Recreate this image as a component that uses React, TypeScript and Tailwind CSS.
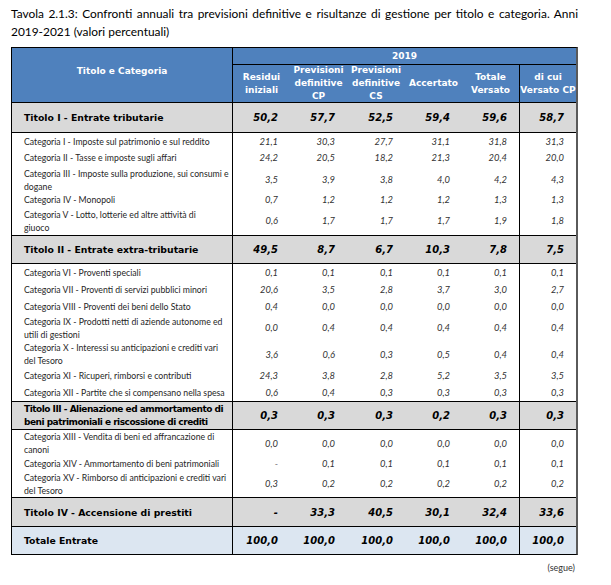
import React from "react";

type RowKind = "titolo" | "cat" | "totale";

interface RowData {
  lines: string[];
  values: string[];
  h: string;
  kind: RowKind;
  edge?: string;
  tight?: boolean;
}

const GRID = "grid grid-cols-[221px_57px_57px_58px_57px_58px_56px]";

const rows: RowData[] = [
  { kind: "titolo", h: "h-[30px]", edge: "border-b", lines: ["Titolo I - Entrate tributarie"], values: ["50,2", "57,7", "52,5", "59,4", "59,6", "58,7"] },
  { kind: "cat", h: "h-[16px]", lines: ["Categoria I - Imposte sul patrimonio e sul reddito"], values: ["21,1", "30,3", "27,7", "31,1", "31,8", "31,3"] },
  { kind: "cat", h: "h-[17px]", lines: ["Categoria II - Tasse e imposte sugli affari"], values: ["24,2", "20,5", "18,2", "21,3", "20,4", "20,0"] },
  { kind: "cat", h: "h-[27px]", lines: ["Categoria III - Imposte sulla produzione, sui consumi e", "dogane"], values: ["3,5", "3,9", "3,8", "4,0", "4,2", "4,3"] },
  { kind: "cat", h: "h-[13px]", lines: ["Categoria IV - Monopoli"], values: ["0,7", "1,2", "1,2", "1,2", "1,3", "1,3"] },
  { kind: "cat", h: "h-[29px]", lines: ["Categoria V - Lotto, lotterie ed altre attività di", "giuoco"], values: ["0,6", "1,7", "1,7", "1,7", "1,9", "1,8"] },
  { kind: "titolo", h: "h-[29px]", edge: "border-y", lines: ["Titolo II - Entrate extra-tributarie"], values: ["49,5", "8,7", "6,7", "10,3", "7,8", "7,5"] },
  { kind: "cat", h: "h-[17px]", lines: ["Categoria VI - Proventi speciali"], values: ["0,1", "0,1", "0,1", "0,1", "0,1", "0,1"] },
  { kind: "cat", h: "h-[17px]", lines: ["Categoria VII - Proventi di servizi pubblici minori"], values: ["20,6", "3,5", "2,8", "3,7", "3,0", "2,7"] },
  { kind: "cat", h: "h-[16px]", lines: ["Categoria VIII - Proventi dei beni dello Stato"], values: ["0,4", "0,0", "0,0", "0,0", "0,0", "0,0"] },
  { kind: "cat", h: "h-[27px]", lines: ["Categoria IX - Prodotti netti di aziende autonome ed", "utili di gestioni"], values: ["0,0", "0,4", "0,4", "0,4", "0,4", "0,4"] },
  { kind: "cat", h: "h-[26px]", lines: ["Categoria X - Interessi su anticipazioni e crediti vari", "del Tesoro"], values: ["3,6", "0,6", "0,3", "0,5", "0,4", "0,4"] },
  { kind: "cat", h: "h-[16px]", lines: ["Categoria XI - Ricuperi, rimborsi e contributi"], values: ["24,3", "3,8", "2,8", "5,2", "3,5", "3,5"] },
  { kind: "cat", h: "h-[18px]", lines: ["Categoria XII - Partite che si compensano nella spesa"], values: ["0,6", "0,4", "0,3", "0,3", "0,3", "0,3"] },
  { kind: "titolo", h: "h-[29px]", edge: "border-y", tight: true, lines: ["Titolo III - Alienazione ed ammortamento di", "beni patrimoniali e riscossione di crediti"], values: ["0,3", "0,3", "0,3", "0,2", "0,3", "0,3"] },
  { kind: "cat", h: "h-[26px]", lines: ["Categoria XIII - Vendita di beni ed affrancazione di", "canoni"], values: ["0,0", "0,0", "0,0", "0,0", "0,0", "0,0"] },
  { kind: "cat", h: "h-[14px]", lines: ["Categoria XIV - Ammortamento di beni patrimoniali"], values: ["-", "0,1", "0,1", "0,1", "0,1", "0,1"] },
  { kind: "cat", h: "h-[27px]", lines: ["Categoria XV - Rimborso di anticipazioni e crediti vari", "del Tesoro"], values: ["0,3", "0,2", "0,2", "0,2", "0,2", "0,2"] },
  { kind: "titolo", h: "h-[30px]", edge: "border-y", lines: ["Titolo IV - Accensione di prestiti"], values: ["-", "33,3", "40,5", "30,1", "32,4", "33,6"] },
  { kind: "totale", h: "h-[27px]", lines: ["Totale Entrate"], values: ["100,0", "100,0", "100,0", "100,0", "100,0", "100,0"] },
];

const subHeads: string[][] = [
  ["Residui", "iniziali"],
  ["Previsioni", "definitive", "CP"],
  ["Previsioni", "definitive", "CS"],
  ["Accertato"],
  ["Totale", "Versato"],
  ["di cui", "Versato CP"],
];

function TableRow({ row }: { row: RowData }) {
  const strong = row.kind !== "cat";
  const bg =
    row.kind === "titolo" ? "bg-[#d9d9d9]" : row.kind === "totale" ? "bg-[#dce6f1]" : "bg-white";
  const labelFont = strong
    ? `font-['DejaVu_Sans',sans-serif] font-bold text-black ${
        row.tight ? "text-[9px] tracking-[-0.5px]" : "text-[9.3px]"
      }`
    : "font-['Lato',sans-serif] text-[8.7px] text-[#262626]";
  const numFont = strong
    ? "font-['DejaVu_Sans',sans-serif] font-bold italic text-[10px] text-black"
    : "font-['Lato',sans-serif] italic text-[9.4px] text-[#333333]";

  return (
    <div className={`${GRID} ${row.h} ${bg} ${row.edge ?? ""} border-black`}>
      <div className={`flex flex-col justify-center border-r border-black pl-3 leading-[13px] ${labelFont}`}>
        {row.lines.map((l) => (
          <span key={l} className="whitespace-nowrap">
            {l}
          </span>
        ))}
      </div>
      {row.values.map((v, i) => (
        <div
          key={i}
          className={`flex items-center justify-end pr-3 leading-[13px] ${numFont} ${
            i === 4 ? "border-r border-black" : ""
          }`}
        >
          {v}
        </div>
      ))}
    </div>
  );
}

export default function App() {
  return (
    <div className="w-[611px] h-[585px] bg-white">
      <div className="ml-[11px] w-[567px] pt-[5px]">
        <p className="font-['Lato',sans-serif] text-[11.9px] leading-[18px] text-black text-justify [text-align-last:justify] whitespace-nowrap">
          Tavola 2.1.3: Confronti annuali tra previsioni definitive e risultanze di gestione per titolo e categoria. Anni
        </p>
        <p className="font-['Lato',sans-serif] text-[11.9px] leading-[18px] text-black">
          2019-2021 (valori percentuali)
        </p>
      </div>

      <div className="ml-[11px] mt-[6px] w-[567px] border-l border-t border-b border-r-2 border-black border-r-[#5a5a5a]">
        <div className={`${GRID} grid-rows-[17px_37px] h-[55px] bg-[#4f81bd] border-b border-black text-white font-['DejaVu_Sans',sans-serif] font-bold text-[9px] leading-[13px]`}>
          <div className="row-span-2 flex items-center justify-center border-r border-black pb-[7px]">
            Titolo e Categoria
          </div>
          <div className="col-span-6 flex items-center justify-center border-b border-black">2019</div>
          {subHeads.map((lines, i) => (
            <div
              key={i}
              className={`flex flex-col items-center justify-center text-center ${
                i === 4 ? "border-r border-black" : ""
              }`}
            >
              {lines.map((l) => (
                <span key={l} className="whitespace-nowrap">
                  {l}
                </span>
              ))}
            </div>
          ))}
        </div>

        {rows.map((r, i) => (
          <TableRow key={i} row={r} />
        ))}
      </div>

      <div className="w-[575px] mt-[6px] text-right font-['Lato',sans-serif] text-[9px] text-[#333333]">
        (segue)
      </div>
    </div>
  );
}
